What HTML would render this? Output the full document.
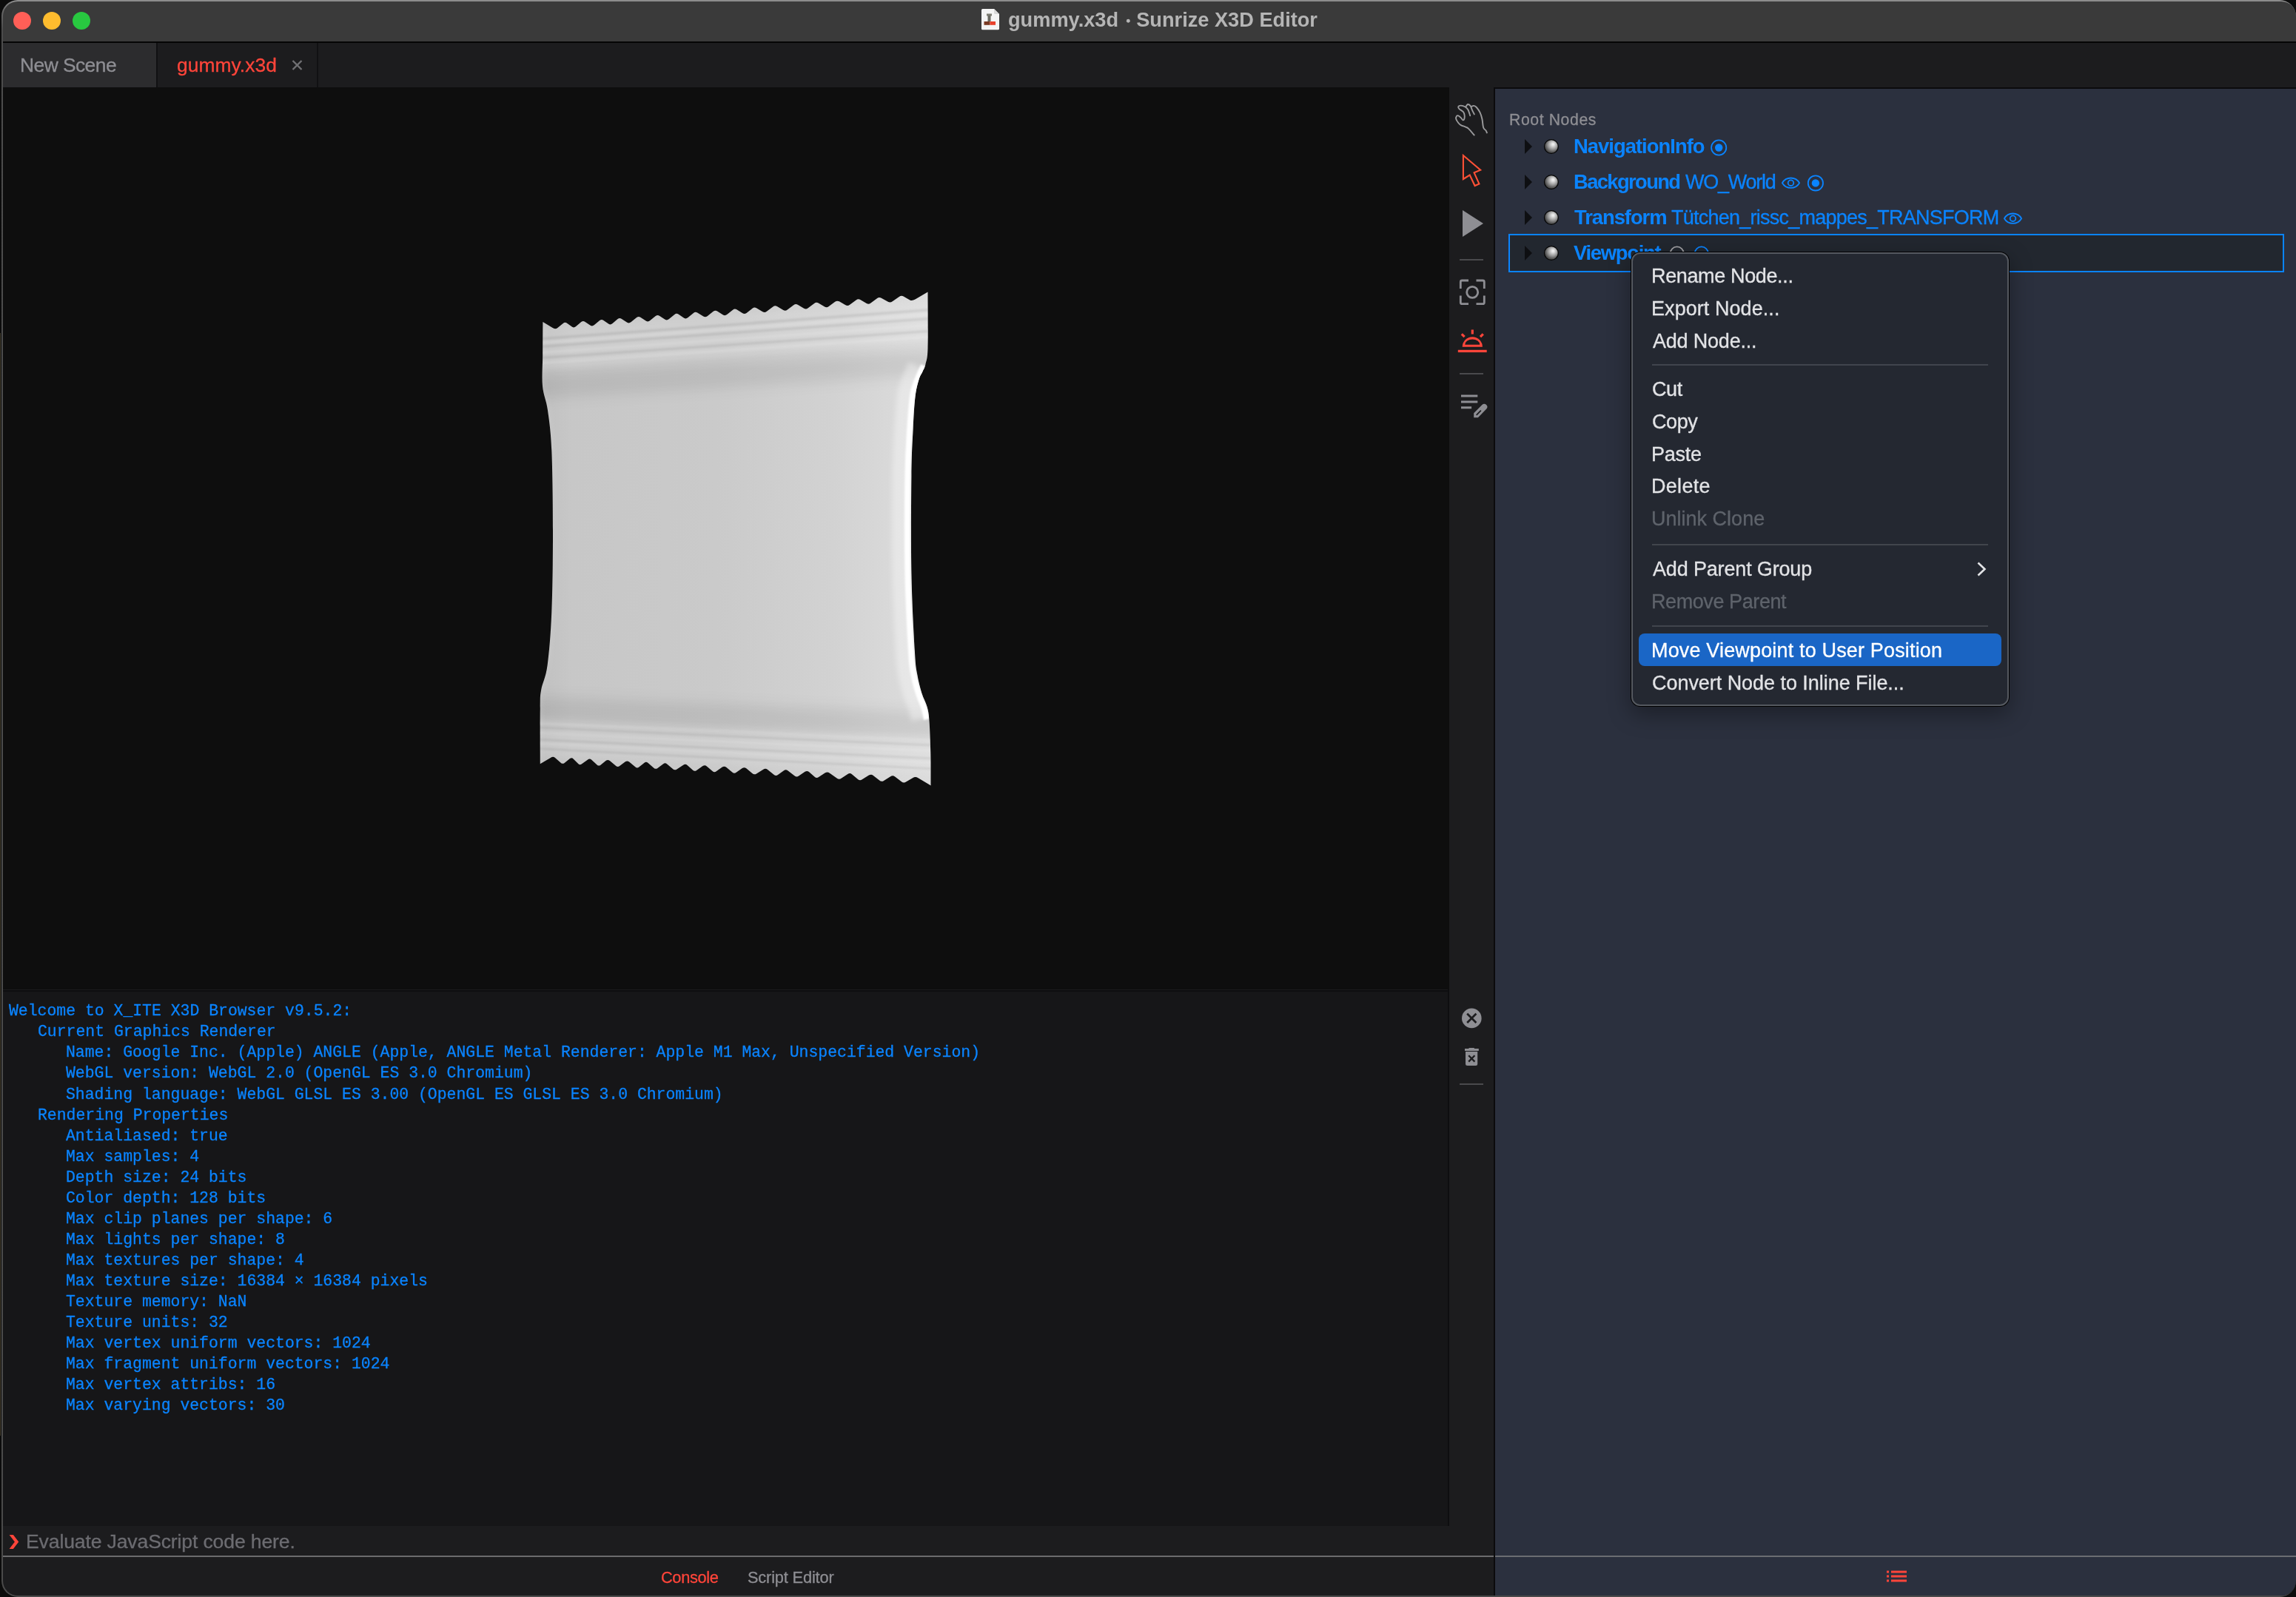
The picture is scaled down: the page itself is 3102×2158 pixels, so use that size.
<!DOCTYPE html>
<html><head><meta charset="utf-8">
<style>
*{margin:0;padding:0;box-sizing:border-box}
html,body{width:3102px;height:2158px;overflow:hidden;background:#0c0c0c}
body{position:relative;font-family:"Liberation Sans",sans-serif}
.a{position:absolute}
.t{position:absolute;white-space:pre;line-height:1;will-change:transform}
#clip{position:absolute;left:0;top:0;width:3102px;height:2158px;clip-path:inset(2px 0px 2px 4px round 20px);z-index:1}
</style></head><body>
<div class="a" style="left:0;top:450px;width:1px;height:1490px;background:#3e3829"></div>
<div class="a" style="left:2px;top:0;width:3100px;height:2158px;border-radius:22px;background:linear-gradient(#8c8c8c 0px,#8c8c8c 2px,#6a6a6a 12px,#4c4c4c 40px,#4a4a4a 100%)"></div>
<div id="clip">
  <div class="a" style="left:0;top:0;width:3102px;height:56px;background:#3a3a3a"></div>
  <div class="a" style="left:0;top:56px;width:3102px;height:2px;background:#050505"></div>
  <div class="a" style="left:0;top:58px;width:3102px;height:60px;background:#1c1c1e"></div>
  <div class="a" style="left:0;top:58px;width:211px;height:60px;background:#2c2c2e"></div>
  <div class="a" style="left:211px;top:58px;width:2px;height:60px;background:#111113"></div>
  <div class="a" style="left:428px;top:58px;width:2px;height:60px;background:#111113"></div>
  <div class="a" style="left:0;top:118px;width:1958px;height:1219px;background:#0e0e0e"></div>
  <div class="a" style="left:0;top:1337px;width:1958px;height:1px;background:#1b1b1d"></div>
  <div class="a" style="left:0;top:1338px;width:1958px;height:2px;background:#0d0d0f"></div>
  <div class="a" style="left:0;top:1340px;width:1956px;height:722px;background:#161618"></div>
  <div class="a" style="left:1956px;top:1337px;width:2px;height:725px;background:#0e0e10"></div>
  <div class="a" style="left:0;top:2062px;width:1958px;height:40px;background:#1c1c1e"></div>
  <div class="a" style="left:1958px;top:118px;width:60px;height:1984px;background:#1c1c1e"></div>
  <div class="a" style="left:0;top:2102px;width:2018px;height:2px;background:#6b6b6d"></div>
  <div class="a" style="left:0;top:2104px;width:2018px;height:54px;background:#1c1c1e"></div>
  <div class="a" style="left:2018px;top:118px;width:1084px;height:2040px;background:#0b0b0d"></div>
  <div class="a" style="left:2020px;top:120px;width:1082px;height:2038px;background:#2b303e"></div>
  <div class="a" style="left:2020px;top:2102px;width:1082px;height:2px;background:#6b6d72"></div>
  <div class="a" style="left:2038px;top:316px;width:1048px;height:52px;border:2px solid #0a84ff;background:#22272f"></div>
</div>
<svg class="a" style="left:0;top:0;z-index:2" width="1958" height="1337" viewBox="0 0 1958 1337"><defs>
<clipPath id="bagclip"><path d="M733.4,434.9 L733.40,434.90 L747.08,443.23 Q750.50,445.32 753.06,443.23 L760.74,436.98 Q763.30,434.90 765.74,436.59 L773.06,441.65 Q775.50,443.33 777.94,441.26 L785.26,435.04 Q787.70,432.96 790.20,434.64 L797.70,439.69 Q800.20,441.37 802.70,439.29 L810.20,433.06 Q812.70,430.98 815.13,432.66 L822.42,437.73 Q824.85,439.41 827.28,437.34 L834.57,431.12 Q837.00,429.05 839.57,430.72 L847.28,435.75 Q849.85,437.43 852.42,435.34 L860.13,429.09 Q862.70,427.01 865.26,428.68 L872.94,433.71 Q875.50,435.39 878.06,433.31 L885.74,427.06 Q888.30,424.97 890.86,426.65 L898.54,431.68 Q901.10,433.36 903.66,431.28 L911.34,425.03 Q913.90,422.94 916.46,424.62 L924.14,429.65 Q926.70,431.33 929.26,429.24 L936.94,422.99 Q939.50,420.91 942.19,422.58 L950.26,427.58 Q952.95,429.24 955.64,427.15 L963.71,420.87 Q966.40,418.77 969.03,420.45 L976.92,425.46 Q979.55,427.13 982.18,425.04 L990.07,418.77 Q992.70,416.69 995.35,418.36 L1003.30,423.36 Q1005.95,425.03 1008.60,422.94 L1016.55,416.67 Q1019.20,414.58 1021.99,416.24 L1030.36,421.22 Q1033.15,422.87 1035.94,420.77 L1044.31,414.47 Q1047.10,412.37 1049.89,414.02 L1058.26,419.00 Q1061.05,420.66 1063.84,418.56 L1072.21,412.25 Q1075.00,410.15 1077.79,411.81 L1086.16,416.78 Q1088.95,418.44 1091.74,416.34 L1100.11,410.04 Q1102.90,407.94 1105.71,409.59 L1114.14,414.56 Q1116.95,416.22 1119.76,414.12 L1128.19,407.81 Q1131.00,405.70 1133.85,407.36 L1142.40,412.32 Q1145.25,413.97 1148.10,411.87 L1156.65,405.55 Q1159.50,403.44 1162.32,405.10 L1170.78,410.07 Q1173.60,411.72 1176.42,409.62 L1184.88,403.31 Q1187.70,401.20 1190.71,402.84 L1199.74,407.77 Q1202.75,409.41 1205.76,407.29 L1214.79,400.93 Q1217.80,398.81 1220.68,400.46 L1229.32,405.42 Q1232.20,407.07 1236.46,404.58 L1253.50,394.60 C1253.50,407.17 1254.00,453.77 1253.50,470.00 C1253.00,486.23 1251.67,486.67 1250.50,492.00 C1249.33,497.33 1248.00,498.53 1246.50,502.00 C1245.00,505.47 1243.17,507.03 1241.50,512.80 C1239.83,518.57 1237.82,525.40 1236.50,536.60 C1235.18,547.80 1234.45,562.27 1233.60,580.00 C1232.75,597.73 1231.77,610.55 1231.40,643.00 C1231.03,675.45 1230.65,735.20 1231.40,774.70 C1232.15,814.20 1234.60,857.28 1235.90,880.00 C1237.20,902.72 1237.63,901.60 1239.20,911.00 C1240.77,920.40 1243.07,929.03 1245.30,936.40 C1247.53,943.77 1250.90,948.93 1252.60,955.20 C1254.30,961.47 1254.72,963.57 1255.50,974.00 C1256.28,984.43 1256.95,1003.20 1257.30,1017.80 C1257.65,1032.40 1257.55,1054.30 1257.60,1061.60 L1257.60,1061.60 L1240.88,1051.51 Q1236.70,1048.99 1233.54,1050.90 L1224.06,1056.61 Q1220.90,1058.51 1217.96,1056.27 L1209.14,1049.54 Q1206.20,1047.30 1203.16,1049.21 L1194.04,1054.94 Q1191.00,1056.85 1188.20,1054.62 L1179.80,1047.91 Q1177.00,1045.67 1173.94,1047.58 L1164.76,1053.31 Q1161.70,1055.22 1159.02,1052.99 L1150.98,1046.31 Q1148.30,1044.08 1145.38,1046.00 L1136.62,1051.75 Q1133.70,1053.67 1130.52,1051.41 L1120.98,1044.64 Q1117.80,1042.38 1114.88,1044.30 L1106.12,1050.05 Q1103.20,1051.97 1100.64,1049.75 L1092.96,1043.08 Q1090.40,1040.86 1087.58,1042.78 L1079.12,1048.55 Q1076.30,1050.48 1073.38,1048.23 L1064.62,1041.51 Q1061.70,1039.26 1059.02,1041.19 L1050.98,1046.99 Q1048.30,1048.92 1045.50,1046.68 L1037.10,1039.98 Q1034.30,1037.74 1031.24,1039.65 L1022.06,1045.38 Q1019.00,1047.29 1016.32,1045.06 L1008.28,1038.37 Q1005.60,1036.14 1002.88,1038.07 L994.72,1043.86 Q992.00,1045.79 989.30,1043.56 L981.20,1036.87 Q978.50,1034.64 975.82,1036.57 L967.78,1042.36 Q965.10,1044.29 962.54,1042.07 L954.86,1035.40 Q952.30,1033.18 949.50,1035.11 L941.10,1040.88 Q938.30,1042.80 935.86,1040.59 L928.54,1033.94 Q926.10,1031.72 923.18,1033.64 L914.42,1039.39 Q911.50,1041.31 908.94,1039.09 L901.26,1032.42 Q898.70,1030.20 896.14,1032.14 L888.46,1037.95 Q885.90,1039.89 883.32,1037.67 L875.58,1031.00 Q873.00,1028.77 870.58,1030.72 L863.32,1036.55 Q860.90,1038.50 858.20,1036.27 L850.10,1029.58 Q847.40,1027.35 844.84,1029.29 L837.16,1035.10 Q834.60,1037.04 831.92,1034.81 L823.88,1028.12 Q821.20,1025.89 818.76,1027.84 L811.44,1033.67 Q809.00,1035.61 806.56,1033.40 L799.24,1026.75 Q796.80,1024.53 794.12,1026.47 L786.08,1032.26 Q783.40,1034.19 781.20,1031.99 L774.60,1025.38 Q772.40,1023.18 769.96,1025.12 L762.64,1030.96 Q760.20,1032.90 757.64,1030.68 L749.96,1024.01 Q747.40,1021.79 743.88,1023.89 L729.80,1032.30 C729.80,1019.75 729.57,973.72 729.80,957.00 C730.03,940.28 729.57,941.67 731.20,932.00 C732.83,922.33 737.25,916.55 739.60,899.00 C741.95,881.45 744.07,856.90 745.30,826.70 C746.53,796.50 747.00,754.08 747.00,717.80 C747.00,681.52 746.47,636.23 745.30,609.00 C744.13,581.77 742.05,568.93 740.00,554.40 C737.95,539.87 734.13,534.20 733.00,521.80 C731.87,509.40 733.13,494.48 733.20,480.00 C733.27,465.52 733.37,442.42 733.40,434.90 Z"/></clipPath>
<linearGradient id="bgH" x1="729" y1="0" x2="1258" y2="0" gradientUnits="userSpaceOnUse">
   <stop offset="0" stop-color="#c0c0c0"/>
   <stop offset="0.08" stop-color="#c7c7c7"/>
   <stop offset="0.45" stop-color="#cacaca"/>
   <stop offset="0.75" stop-color="#d2d2d2"/>
   <stop offset="0.88" stop-color="#d8d8d8"/>
   <stop offset="1" stop-color="#dcdcdc"/>
  </linearGradient>
<filter id="b1" filterUnits="userSpaceOnUse" x="650" y="330" width="700" height="800"><feGaussianBlur stdDeviation="1.2"/></filter>
<filter id="b3" filterUnits="userSpaceOnUse" x="650" y="330" width="700" height="800"><feGaussianBlur stdDeviation="3"/></filter>
<filter id="b8" filterUnits="userSpaceOnUse" x="650" y="330" width="700" height="800"><feGaussianBlur stdDeviation="9"/></filter>
</defs>
<g clip-path="url(#bagclip)">
<rect x="720" y="380" width="550" height="700" fill="url(#bgH)"/>
<path d="M700,523.5 L1290,488.1" stroke="#000" stroke-opacity="0.075" stroke-width="34" filter="url(#b8)"/>
<path d="M700,957.4 L1290,980.4" stroke="#000" stroke-opacity="0.075" stroke-width="34" filter="url(#b8)"/>
<path d="M700,473.4 L1290,431.1" stroke="#fff" stroke-opacity="0.10" stroke-width="56" filter="url(#b3)"/>
<path d="M700,994.4 L1290,1022.4" stroke="#fff" stroke-opacity="0.08" stroke-width="50" filter="url(#b3)"/>
<path d="M700,460.2 L1290,416.1" stroke="#000" stroke-opacity="0.075" stroke-width="3.5" filter="url(#b1)"/>
<path d="M700,470.7 L1290,428.1" stroke="#000" stroke-opacity="0.075" stroke-width="3.5" filter="url(#b1)"/>
<path d="M700,485.7 L1290,445.1" stroke="#000" stroke-opacity="0.075" stroke-width="3.5" filter="url(#b1)"/>
<path d="M700,465.4 L1290,422.1" stroke="#fff" stroke-opacity="0.12" stroke-width="3.5" filter="url(#b1)"/>
<path d="M700,478.6 L1290,437.1" stroke="#fff" stroke-opacity="0.12" stroke-width="3.5" filter="url(#b1)"/>
<path d="M700,492.7 L1290,453.1" stroke="#fff" stroke-opacity="0.12" stroke-width="3.5" filter="url(#b1)"/>
<path d="M700,1010.2 L1290,1040.4" stroke="#000" stroke-opacity="0.065" stroke-width="3" filter="url(#b1)"/>
<path d="M700,997.9 L1290,1026.4" stroke="#000" stroke-opacity="0.065" stroke-width="3" filter="url(#b1)"/>
<path d="M700,982.0 L1290,1008.4" stroke="#000" stroke-opacity="0.065" stroke-width="3" filter="url(#b1)"/>
<path d="M700,1003.2 L1290,1032.4" stroke="#fff" stroke-opacity="0.10" stroke-width="3" filter="url(#b1)"/>
<path d="M700,989.1 L1290,1016.4" stroke="#fff" stroke-opacity="0.10" stroke-width="3" filter="url(#b1)"/>
<path d="M700,975.9 L1290,1001.4" stroke="#fff" stroke-opacity="0.10" stroke-width="3" filter="url(#b1)"/>
<path d="M1238.00,494.00 C1236.92,496.33 1233.92,501.67 1231.50,508.00 C1229.08,514.33 1225.53,520.33 1223.50,532.00 C1221.47,543.67 1220.48,559.50 1219.30,578.00 C1218.12,596.50 1216.88,610.22 1216.40,643.00 C1215.92,675.78 1215.65,735.20 1216.40,774.70 C1217.15,814.20 1219.60,857.28 1220.90,880.00 C1222.20,902.72 1222.58,901.67 1224.20,911.00 C1225.82,920.33 1228.27,928.50 1230.60,936.00 C1232.93,943.50 1236.30,950.00 1238.20,956.00 C1240.10,962.00 1241.37,969.33 1242.00,972.00" fill="none" stroke="#fff" stroke-opacity="0.35" stroke-width="22" filter="url(#b3)"/>
<path d="M1248.00,494.00 C1246.92,496.33 1243.92,501.67 1241.50,508.00 C1239.08,514.33 1235.53,520.33 1233.50,532.00 C1231.47,543.67 1230.48,559.50 1229.30,578.00 C1228.12,596.50 1226.88,610.22 1226.40,643.00 C1225.92,675.78 1225.65,735.20 1226.40,774.70 C1227.15,814.20 1229.60,857.28 1230.90,880.00 C1232.20,902.72 1232.58,901.67 1234.20,911.00 C1235.82,920.33 1238.27,928.50 1240.60,936.00 C1242.93,943.50 1246.30,950.00 1248.20,956.00 C1250.10,962.00 1251.37,969.33 1252.00,972.00" fill="none" stroke="#fff" stroke-opacity="1" stroke-width="8" filter="url(#b1)"/>
<path d="M729.80,1040.00 C729.80,1026.17 729.57,975.00 729.80,957.00 C730.03,939.00 729.57,941.67 731.20,932.00 C732.83,922.33 737.25,916.55 739.60,899.00 C741.95,881.45 744.07,856.90 745.30,826.70 C746.53,796.50 747.00,754.08 747.00,717.80 C747.00,681.52 746.47,636.23 745.30,609.00 C744.13,581.77 742.05,568.93 740.00,554.40 C737.95,539.87 734.13,534.20 733.00,521.80 C731.87,509.40 733.13,496.13 733.20,480.00 C733.27,463.87 733.37,434.17 733.40,425.00" fill="none" stroke="#fff" stroke-opacity="0.08" stroke-width="6" filter="url(#b3)"/>
</g></svg>
<svg class="a" style="left:0;top:0;z-index:3" width="3102" height="2158" viewBox="0 0 3102 2158">
<defs><radialGradient id="sph2" cx="0.58" cy="0.4" r="0.62" fx="0.63" fy="0.33">
   <stop offset="0" stop-color="#f6f6f6"/><stop offset="0.18" stop-color="#dedede"/><stop offset="0.5" stop-color="#a0a0a0"/><stop offset="0.8" stop-color="#5c5c5c"/><stop offset="1" stop-color="#3a3a3a"/>
</radialGradient></defs>
<path d="M1991.70,182.50 C1990.43,181.07 1985.93,175.68 1984.10,173.90 C1982.27,172.12 1982.42,172.60 1980.70,171.80 C1978.98,171.00 1975.53,170.07 1973.80,169.10 C1972.07,168.13 1971.40,167.38 1970.30,166.00 C1969.20,164.62 1967.60,162.30 1967.20,160.80 C1966.80,159.30 1967.38,157.75 1967.90,157.00 C1968.42,156.25 1969.32,155.95 1970.30,156.30 C1971.28,156.65 1972.77,158.10 1973.80,159.10 C1974.83,160.10 1975.73,162.08 1976.50,162.30 C1977.27,162.52 1978.05,161.50 1978.40,160.40 C1978.75,159.30 1978.85,157.23 1978.60,155.70 C1978.35,154.17 1978.10,152.63 1976.90,151.20 C1975.70,149.77 1972.50,148.30 1971.40,147.10 C1970.30,145.90 1969.90,144.75 1970.30,144.00 C1970.70,143.25 1972.30,142.55 1973.80,142.60 C1975.30,142.65 1977.70,143.37 1979.30,144.30 C1980.90,145.23 1982.25,146.20 1983.40,148.20 C1984.55,150.20 1985.73,154.95 1986.20,156.30" fill="none" stroke="#9a9a9c" stroke-width="1.9" stroke-linecap="round" stroke-linejoin="round"/><path d="M1980.30,144.60 C1980.73,144.00 1981.87,141.28 1982.90,141.00 C1983.93,140.72 1985.52,141.68 1986.50,142.90 C1987.48,144.12 1987.92,146.38 1988.80,148.30 C1989.68,150.22 1991.30,153.38 1991.80,154.40" fill="none" stroke="#9a9a9c" stroke-width="1.9" stroke-linecap="round"/><path d="M1988.00,144.10 C1988.50,143.90 1989.87,142.75 1991.00,142.90 C1992.13,143.05 1993.37,143.45 1994.80,145.00 C1996.23,146.55 1998.33,149.57 1999.60,152.20 C2000.87,154.83 2001.65,157.47 2002.40,160.80 C2003.15,164.13 2003.23,169.58 2004.10,172.20 C2004.97,174.82 2006.80,175.30 2007.60,176.50 C2008.40,177.70 2008.68,178.92 2008.90,179.40" fill="none" stroke="#9a9a9c" stroke-width="1.9" stroke-linecap="round"/><path d="M1976.9,210.0 L2000.2,229.6 L1991.6,233.4 L1998.4,248.4 L1992.6,251.0 L1985.7,236.5 L1976.9,242.0 Z" fill="none" stroke="#ff5136" stroke-width="2.1" stroke-linejoin="miter"/><path d="M1976,284 L2004,302 L1976,320 Z" fill="#8e8e93"/><rect x="1972" y="350" width="32" height="2" fill="#4a4a4d"/><rect x="1972" y="504" width="32" height="2" fill="#4a4a4d"/><rect x="1972" y="1464" width="32" height="2" fill="#4a4a4d"/><path d="M1973.3,390 L1973.3,381 Q1973.3,379 1975.3,379 L1984,379 M1994.5,379 L2003.3,379 Q2005.3,379 2005.3,381 L2005.3,390 M2005.3,399.5 L2005.3,408.7 Q2005.3,410.7 2003.3,410.7 L1994.5,410.7 M1984,410.7 L1975.3,410.7 Q1973.3,410.7 1973.3,408.7 L1973.3,399.5" fill="none" stroke="#8e8e93" stroke-width="2.8"/><circle cx="1989.2" cy="394.9" r="7.5" fill="none" stroke="#8e8e93" stroke-width="2.8"/><rect x="1969.8" y="472.8" width="38.9" height="3.3" fill="#ff453a"/><path d="M1975.7,468.8 A13.6,13.6 0 0 1 2002.9,468.8 Z" fill="#ff453a"/><path d="M1979.3,465.7 A10.0,7.3 0 0 1 1999.3,465.7 Z" fill="#1c1c1e"/><path d="M1989.3,445.6 L1989.3,451.6 M1974.8,451.3 L1978.6,455.1 M2003.8,451.3 L2000.0,455.1" stroke="#ff453a" stroke-width="3.2"/><rect x="1974" y="533.5" width="22.3" height="3" fill="#8e8e93"/><rect x="1974" y="541.5" width="22.3" height="3" fill="#8e8e93"/><rect x="1974" y="549.3" width="14.1" height="3" fill="#8e8e93"/><path d="M1991.2,564.2 L1991.2,558.3 L2002.4,547.1 A4.0,4.0 0 0 1 2008.1,552.8 L1996.9,564.2 Z" fill="#8e8e93"/><path d="M1995.2,560.4 L2000.4,555.1" stroke="#1c1c1e" stroke-width="1.8" stroke-linecap="round"/><circle cx="1988.3" cy="1375.9" r="13.3" fill="#8e8e93"/><path d="M1982.2,1369.8 L1994.4,1382.0 M1994.4,1369.8 L1982.2,1382.0" stroke="#1c1c1e" stroke-width="2.7"/><rect x="1979" y="1417" width="18.8" height="3" fill="#8e8e93"/><rect x="1984.3" y="1416" width="7.7" height="2" rx="0.8" fill="#8e8e93"/><path d="M1980,1421 L1996.2,1421 L1996.2,1437.5 Q1996.2,1440 1993.7,1440 L1982.5,1440 Q1980,1440 1980,1437.5 Z" fill="#8e8e93"/><path d="M1984.2,1426.2 L1992.4,1434.6 M1992.4,1426.2 L1984.2,1434.6" stroke="#1c1c1e" stroke-width="2.3"/><rect x="2549" y="2122.5" width="3" height="3" fill="#ff453a"/><rect x="2555" y="2122.5" width="21" height="3" fill="#ff453a"/><rect x="2549" y="2128.5" width="3" height="3" fill="#ff453a"/><rect x="2555" y="2128.5" width="21" height="3" fill="#ff453a"/><rect x="2549" y="2134.5" width="3" height="3" fill="#ff453a"/><rect x="2555" y="2134.5" width="21" height="3" fill="#ff453a"/><path d="M2060,188.1 L2070,198.0 L2060,207.9 Z" fill="#0e0f12"/><circle cx="2095.9" cy="198" r="9.4" fill="url(#sph2)" stroke="#050505" stroke-width="1.3"/><path d="M2060,236.1 L2070,246.0 L2060,255.9 Z" fill="#0e0f12"/><circle cx="2095.9" cy="246" r="9.4" fill="url(#sph2)" stroke="#050505" stroke-width="1.3"/><path d="M2060,284.1 L2070,294.0 L2060,303.9 Z" fill="#0e0f12"/><circle cx="2095.9" cy="294" r="9.4" fill="url(#sph2)" stroke="#050505" stroke-width="1.3"/><path d="M2060,332.1 L2070,342.0 L2060,351.9 Z" fill="#0e0f12"/><circle cx="2095.9" cy="342" r="9.4" fill="url(#sph2)" stroke="#050505" stroke-width="1.3"/><circle cx="2322.2" cy="199.5" r="10.1" fill="none" stroke="#0a84ff" stroke-width="1.8"/><circle cx="2322.2" cy="199.5" r="5.2" fill="#0a84ff"/><path d="M2407.9,247.2 A13.4,13.4 0 0 1 2431.1,247.2 A13.4,13.4 0 0 1 2407.9,247.2 Z" fill="none" stroke="#0a84ff" stroke-width="1.8" stroke-linejoin="round"/><circle cx="2419.5" cy="247.2" r="3.8" fill="none" stroke="#0a84ff" stroke-width="1.8"/><circle cx="2452.9" cy="247.4" r="10.1" fill="none" stroke="#0a84ff" stroke-width="1.8"/><circle cx="2452.9" cy="247.4" r="5.2" fill="#0a84ff"/><path d="M2707.9,295.2 A13.4,13.4 0 0 1 2731.1,295.2 A13.4,13.4 0 0 1 2707.9,295.2 Z" fill="none" stroke="#0a84ff" stroke-width="1.8" stroke-linejoin="round"/><circle cx="2719.5" cy="295.2" r="3.8" fill="none" stroke="#0a84ff" stroke-width="1.8"/><circle cx="2265.7" cy="342.5" r="9.1" fill="none" stroke="#a0a0a4" stroke-width="1.8"/><circle cx="2298.8" cy="342.5" r="9.1" fill="none" stroke="#0a84ff" stroke-width="1.8"/><circle cx="30" cy="28" r="12" fill="#ff5f57"/><circle cx="70" cy="28" r="12" fill="#febc2e"/><circle cx="110" cy="28" r="12" fill="#28c840"/><path d="M1327.5,12 L1343,12 L1350,19 L1350,38.8 Q1350,40.3 1348.5,40.3 L1327.5,40.3 Q1326,40.3 1326,38.8 L1326,13.5 Q1326,12 1327.5,12 Z" fill="#f4f4f4"/><path d="M1343,12 L1343,17.5 Q1343,19 1344.5,19 L1350,19 Z" fill="#d8d8d8"/><rect x="1333" y="18.5" width="7" height="3" fill="#7d7d73"/><rect x="1334.5" y="21" width="4" height="8" fill="#6a6a62"/><rect x="1329.5" y="29" width="8" height="4.8" fill="#7a3b24"/><rect x="1337.5" y="29" width="7.5" height="4.8" fill="#e8402a"/><path d="M395.5,82 L407.5,94 M407.5,82 L395.5,94" stroke="#707073" stroke-width="2.4"/><path d="M12.6,2074 L17.9,2074 L25.2,2083.5 L17.9,2093 L12.6,2093 L19.9,2083.5 Z" fill="#ff453a"/><path d="M2672.5,760.5 L2681.5,769 L2672.5,777.5" fill="none" stroke="#e2e3e6" stroke-width="2.6"/>
</svg>
<svg class="a" style="left:1510px;top:15px;z-index:6" width="25" height="25" viewBox="1510 15 25 25"><rect x="1513" y="22" width="19" height="10" fill="#3a3a3a"/><circle cx="1524.3" cy="28.2" r="2.45" fill="#b5b5b5"/></svg>
<!-- context menu -->
<div class="a" style="left:2203px;top:339.5px;width:511.5px;height:615.5px;border-radius:13px;background:#000;z-index:18;box-shadow:0 10px 30px rgba(0,0,0,0.35)"></div>
<div class="a" style="left:2204px;top:340.5px;width:509.5px;height:613.5px;border-radius:12px;background:#242831;border:2.2px solid #555960;z-index:19"></div>
<div class="a" style="left:2232px;top:491.5px;width:454px;height:2px;background:#41454d;z-index:20"></div>
<div class="a" style="left:2232px;top:734.5px;width:454px;height:2px;background:#41454d;z-index:20"></div>
<div class="a" style="left:2232px;top:844.5px;width:454px;height:2px;background:#41454d;z-index:20"></div>
<div class="a" style="left:2214px;top:856px;width:490px;height:44px;border-radius:8px;background:#1a66c6;z-index:20"></div>
<svg class="a" style="left:2660px;top:750px;z-index:21" width="30" height="36" viewBox="2660 750 30 36"><path d="M2672.5,760.5 L2681.5,769 L2672.5,777.5" fill="none" stroke="#e2e3e6" stroke-width="2.6"/></svg>
<div class="t" style="left:1362.00px;top:13.00px;font-family:'Liberation Sans';font-size:27.2px;font-weight:700;letter-spacing:0.000px;color:#b5b5b5;z-index:5">gummy.x3d · Sunrize X3D Editor</div>
<div class="t" style="left:27.40px;top:75.00px;font-family:'Liberation Sans';font-size:26.4px;font-weight:400;letter-spacing:-0.550px;color:#8e8e93;z-index:5;-webkit-text-stroke:0.3px #8e8e93">New Scene</div>
<div class="t" style="left:238.80px;top:75.00px;font-family:'Liberation Sans';font-size:26.4px;font-weight:400;letter-spacing:0.062px;color:#ff453a;z-index:5;-webkit-text-stroke:0.3px #ff453a">gummy.x3d</div>
<div class="t" style="left:2039.00px;top:151.20px;font-family:'Liberation Sans';font-size:21.2px;font-weight:400;letter-spacing:0.611px;color:#8e8e93;z-index:5;-webkit-text-stroke:0.3px #8e8e93">Root Nodes</div>
<div class="t" style="left:2125.70px;top:184.00px;font-family:'Liberation Sans';font-size:27.4px;font-weight:700;letter-spacing:-0.977px;color:#0a84ff;z-index:5">NavigationInfo</div>
<div class="t" style="left:2125.70px;top:231.70px;font-family:'Liberation Sans';font-size:27.4px;font-weight:700;letter-spacing:-1.633px;color:#0a84ff;z-index:5">Background</div>
<div class="t" style="left:2276.80px;top:232.70px;font-family:'Liberation Sans';font-size:27.0px;font-weight:400;letter-spacing:-1.257px;color:#0a84ff;z-index:5;-webkit-text-stroke:0.3px #0a84ff">WO_World</div>
<div class="t" style="left:2126.70px;top:279.90px;font-family:'Liberation Sans';font-size:27.4px;font-weight:700;letter-spacing:-1.050px;color:#0a84ff;z-index:5">Transform</div>
<div class="t" style="left:2257.50px;top:280.90px;font-family:'Liberation Sans';font-size:27.0px;font-weight:400;letter-spacing:-0.755px;color:#0a84ff;z-index:5;-webkit-text-stroke:0.3px #0a84ff">Tütchen_rissc_mappes_TRANSFORM</div>
<div class="t" style="left:2126.20px;top:327.50px;font-family:'Liberation Sans';font-size:27.4px;font-weight:700;letter-spacing:-1.275px;color:#0a84ff;z-index:5">Viewpoint</div>
<div class="t" style="left:2231.20px;top:360.10px;font-family:'Liberation Sans';font-size:27.0px;font-weight:400;letter-spacing:-0.362px;color:#e2e3e6;z-index:20;-webkit-text-stroke:0.3px #e2e3e6">Rename Node...</div>
<div class="t" style="left:2231.20px;top:404.20px;font-family:'Liberation Sans';font-size:27.0px;font-weight:400;letter-spacing:0.062px;color:#e2e3e6;z-index:20;-webkit-text-stroke:0.3px #e2e3e6">Export Node...</div>
<div class="t" style="left:2233.20px;top:448.00px;font-family:'Liberation Sans';font-size:27.0px;font-weight:400;letter-spacing:-0.200px;color:#e2e3e6;z-index:20;-webkit-text-stroke:0.3px #e2e3e6">Add Node...</div>
<div class="t" style="left:2232.20px;top:513.00px;font-family:'Liberation Sans';font-size:27.0px;font-weight:400;letter-spacing:-0.400px;color:#e2e3e6;z-index:20;-webkit-text-stroke:0.3px #e2e3e6">Cut</div>
<div class="t" style="left:2232.20px;top:556.75px;font-family:'Liberation Sans';font-size:27.0px;font-weight:400;letter-spacing:-0.433px;color:#e2e3e6;z-index:20;-webkit-text-stroke:0.3px #e2e3e6">Copy</div>
<div class="t" style="left:2231.20px;top:600.50px;font-family:'Liberation Sans';font-size:27.0px;font-weight:400;letter-spacing:-0.250px;color:#e2e3e6;z-index:20;-webkit-text-stroke:0.3px #e2e3e6">Paste</div>
<div class="t" style="left:2231.20px;top:644.00px;font-family:'Liberation Sans';font-size:27.0px;font-weight:400;letter-spacing:0.300px;color:#e2e3e6;z-index:20;-webkit-text-stroke:0.3px #e2e3e6">Delete</div>
<div class="t" style="left:2231.20px;top:688.00px;font-family:'Liberation Sans';font-size:27.0px;font-weight:400;letter-spacing:0.009px;color:#5e636b;z-index:20;-webkit-text-stroke:0.3px #5e636b">Unlink Clone</div>
<div class="t" style="left:2233.20px;top:755.80px;font-family:'Liberation Sans';font-size:27.0px;font-weight:400;letter-spacing:-0.160px;color:#e2e3e6;z-index:20;-webkit-text-stroke:0.3px #e2e3e6">Add Parent Group</div>
<div class="t" style="left:2231.20px;top:800.00px;font-family:'Liberation Sans';font-size:27.0px;font-weight:400;letter-spacing:-0.417px;color:#5e636b;z-index:20;-webkit-text-stroke:0.3px #5e636b">Remove Parent</div>
<div class="t" style="left:2231.20px;top:866.00px;font-family:'Liberation Sans';font-size:27.0px;font-weight:400;letter-spacing:0.160px;color:#ffffff;z-index:20;-webkit-text-stroke:0.3px #ffffff">Move Viewpoint to User Position</div>
<div class="t" style="left:2232.20px;top:909.80px;font-family:'Liberation Sans';font-size:27.0px;font-weight:400;letter-spacing:-0.048px;color:#e2e3e6;z-index:20;-webkit-text-stroke:0.3px #e2e3e6">Convert Node to Inline File...</div>
<div class="t" style="left:34.60px;top:2070.40px;font-family:'Liberation Sans';font-size:26.6px;font-weight:400;letter-spacing:-0.148px;color:#6c6c71;z-index:5;-webkit-text-stroke:0.3px #6c6c71">Evaluate JavaScript code here.</div>
<div class="t" style="left:893.40px;top:2120.80px;font-family:'Liberation Sans';font-size:21.8px;font-weight:400;letter-spacing:-0.367px;color:#ff453a;z-index:5;-webkit-text-stroke:0.3px #ff453a">Console</div>
<div class="t" style="left:1010.00px;top:2120.80px;font-family:'Liberation Sans';font-size:21.8px;font-weight:400;letter-spacing:-0.167px;color:#8e8e93;z-index:5;-webkit-text-stroke:0.3px #8e8e93">Script Editor</div>
<div class="t" style="left:12.20px;top:1356.30px;font-family:'Liberation Mono';font-size:21.45px;font-weight:400;letter-spacing:0.000px;color:#0a84ff;z-index:5;-webkit-text-stroke:0.3px #0a84ff">Welcome to X_ITE X3D Browser v9.5.2:</div>
<div class="t" style="left:50.81px;top:1384.35px;font-family:'Liberation Mono';font-size:21.45px;font-weight:400;letter-spacing:0.000px;color:#0a84ff;z-index:5;-webkit-text-stroke:0.3px #0a84ff">Current Graphics Renderer</div>
<div class="t" style="left:89.42px;top:1412.40px;font-family:'Liberation Mono';font-size:21.45px;font-weight:400;letter-spacing:0.000px;color:#0a84ff;z-index:5;-webkit-text-stroke:0.3px #0a84ff">Name: Google Inc. (Apple) ANGLE (Apple, ANGLE Metal Renderer: Apple M1 Max, Unspecified Version)</div>
<div class="t" style="left:89.42px;top:1440.45px;font-family:'Liberation Mono';font-size:21.45px;font-weight:400;letter-spacing:0.000px;color:#0a84ff;z-index:5;-webkit-text-stroke:0.3px #0a84ff">WebGL version: WebGL 2.0 (OpenGL ES 3.0 Chromium)</div>
<div class="t" style="left:89.42px;top:1468.50px;font-family:'Liberation Mono';font-size:21.45px;font-weight:400;letter-spacing:0.000px;color:#0a84ff;z-index:5;-webkit-text-stroke:0.3px #0a84ff">Shading language: WebGL GLSL ES 3.00 (OpenGL ES GLSL ES 3.0 Chromium)</div>
<div class="t" style="left:50.81px;top:1496.55px;font-family:'Liberation Mono';font-size:21.45px;font-weight:400;letter-spacing:0.000px;color:#0a84ff;z-index:5;-webkit-text-stroke:0.3px #0a84ff">Rendering Properties</div>
<div class="t" style="left:89.42px;top:1524.60px;font-family:'Liberation Mono';font-size:21.45px;font-weight:400;letter-spacing:0.000px;color:#0a84ff;z-index:5;-webkit-text-stroke:0.3px #0a84ff">Antialiased: true</div>
<div class="t" style="left:89.42px;top:1552.65px;font-family:'Liberation Mono';font-size:21.45px;font-weight:400;letter-spacing:0.000px;color:#0a84ff;z-index:5;-webkit-text-stroke:0.3px #0a84ff">Max samples: 4</div>
<div class="t" style="left:89.42px;top:1580.70px;font-family:'Liberation Mono';font-size:21.45px;font-weight:400;letter-spacing:0.000px;color:#0a84ff;z-index:5;-webkit-text-stroke:0.3px #0a84ff">Depth size: 24 bits</div>
<div class="t" style="left:89.42px;top:1608.75px;font-family:'Liberation Mono';font-size:21.45px;font-weight:400;letter-spacing:0.000px;color:#0a84ff;z-index:5;-webkit-text-stroke:0.3px #0a84ff">Color depth: 128 bits</div>
<div class="t" style="left:89.42px;top:1636.80px;font-family:'Liberation Mono';font-size:21.45px;font-weight:400;letter-spacing:0.000px;color:#0a84ff;z-index:5;-webkit-text-stroke:0.3px #0a84ff">Max clip planes per shape: 6</div>
<div class="t" style="left:89.42px;top:1664.85px;font-family:'Liberation Mono';font-size:21.45px;font-weight:400;letter-spacing:0.000px;color:#0a84ff;z-index:5;-webkit-text-stroke:0.3px #0a84ff">Max lights per shape: 8</div>
<div class="t" style="left:89.42px;top:1692.90px;font-family:'Liberation Mono';font-size:21.45px;font-weight:400;letter-spacing:0.000px;color:#0a84ff;z-index:5;-webkit-text-stroke:0.3px #0a84ff">Max textures per shape: 4</div>
<div class="t" style="left:89.42px;top:1720.95px;font-family:'Liberation Mono';font-size:21.45px;font-weight:400;letter-spacing:0.000px;color:#0a84ff;z-index:5;-webkit-text-stroke:0.3px #0a84ff">Max texture size: 16384 × 16384 pixels</div>
<div class="t" style="left:89.42px;top:1749.00px;font-family:'Liberation Mono';font-size:21.45px;font-weight:400;letter-spacing:0.000px;color:#0a84ff;z-index:5;-webkit-text-stroke:0.3px #0a84ff">Texture memory: NaN</div>
<div class="t" style="left:89.42px;top:1777.05px;font-family:'Liberation Mono';font-size:21.45px;font-weight:400;letter-spacing:0.000px;color:#0a84ff;z-index:5;-webkit-text-stroke:0.3px #0a84ff">Texture units: 32</div>
<div class="t" style="left:89.42px;top:1805.10px;font-family:'Liberation Mono';font-size:21.45px;font-weight:400;letter-spacing:0.000px;color:#0a84ff;z-index:5;-webkit-text-stroke:0.3px #0a84ff">Max vertex uniform vectors: 1024</div>
<div class="t" style="left:89.42px;top:1833.15px;font-family:'Liberation Mono';font-size:21.45px;font-weight:400;letter-spacing:0.000px;color:#0a84ff;z-index:5;-webkit-text-stroke:0.3px #0a84ff">Max fragment uniform vectors: 1024</div>
<div class="t" style="left:89.42px;top:1861.20px;font-family:'Liberation Mono';font-size:21.45px;font-weight:400;letter-spacing:0.000px;color:#0a84ff;z-index:5;-webkit-text-stroke:0.3px #0a84ff">Max vertex attribs: 16</div>
<div class="t" style="left:89.42px;top:1889.25px;font-family:'Liberation Mono';font-size:21.45px;font-weight:400;letter-spacing:0.000px;color:#0a84ff;z-index:5;-webkit-text-stroke:0.3px #0a84ff">Max varying vectors: 30</div>
</body></html>
